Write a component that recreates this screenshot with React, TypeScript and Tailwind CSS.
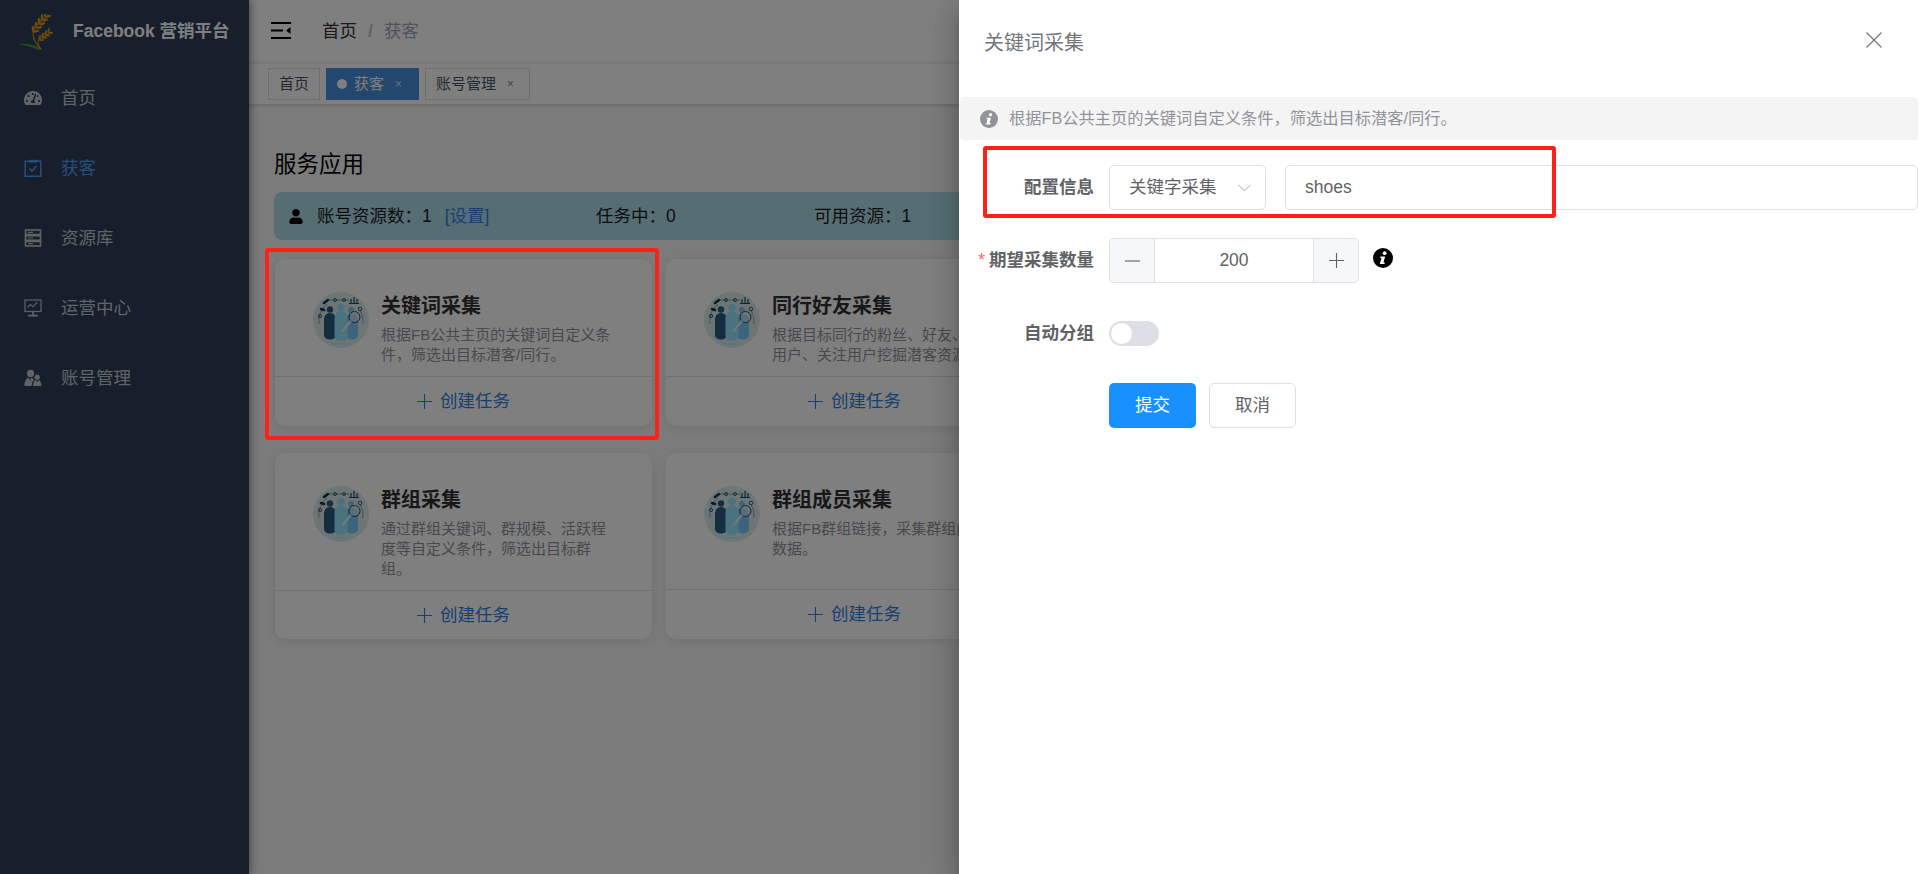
import { FaTachometerAlt, FaUser } from "react-icons/fa";

const menuItems = [
    { label: "首页", icon: <FaTachometerAlt className="w-[18px] h-[18px]" /> },
    { label: "获客", icon: <ClipboardIcon />, active: true },
    { label: "资源库", icon: <ServerIcon /> },
    { label: "运营中心", icon: <MonitorIcon /> },
    { label: "账号管理", icon: <PeopleIcon /> },
];

const cards = [
    { title: "关键词采集", desc: "根据FB公共主页的关键词自定义条件，筛选出目标潜客/同行。" },
    { title: "同行好友采集", desc: "根据目标同行的粉丝、好友、评论用户、关注用户挖掘潜客资源。" },
    { title: "群组采集", desc: "通过群组关键词、群规模、活跃程度等自定义条件，筛选出目标群组。" },
    { title: "群组成员采集", desc: "根据FB群组链接，采集群组内成员数据。" },
];

function ClipboardIcon() {
    return (
        <svg width="18" height="18" viewBox="0 0 18 18" fill="none" stroke="currentColor" strokeWidth="1.4">
            <path d="M5 2.2H1.2v15h15.6v-15H13" />
            <rect x="5" y="0.8" width="8" height="2.8" fill="currentColor" stroke="none" />
            <path d="M5.5 9.5l2.5 2.5 4.500-5" strokeWidth="1.6" />
        </svg>
    );
}

function ServerIcon() {
    return (
        <svg width="18" height="18" viewBox="0 0 18 18" fill="none" stroke="currentColor" strokeWidth="1.6">
            <rect x="1.5" y="1" width="15" height="4.6" />
            <rect x="1.5" y="6.7" width="15" height="4.6" />
            <rect x="1.5" y="12.4" width="15" height="4.6" />
            <path d="M4 3.3h5M4 9h5M4 14.7h5" strokeWidth="1.2" />
        </svg>
    );
}

function MonitorIcon() {
    return (
        <svg width="18" height="18" viewBox="0 0 18 18" fill="none" stroke="currentColor" strokeWidth="1.2">
            <rect x="1" y="1" width="16" height="11.5" />
            <path d="M3.5 8.5l3-3 2.5 2.2 4.5-4.5" />
            <path d="M9 12.5v3.6M4 16.6h10" strokeWidth="1.6" />
        </svg>
    );
}

function PeopleIcon() {
    return (
        <svg width="18" height="18" viewBox="0 0 18 18" fill="currentColor">
            <circle cx="6.5" cy="4.4" r="3.6" />
            <path d="M0.5 17c0-4.4 1.5-8 4.4-8.3L6 12l1-3.3c1.4.2 2.5 1.1 3 2.5-1.6.9-2.3 3-2.3 5.8z" />
            <circle cx="13.2" cy="8.2" r="2.6" />
            <path d="M9 17c0-3.2 1.2-5.6 3.4-5.9l.8 2.4.8-2.4c2.2.3 3.5 2.7 3.5 5.9z" />
        </svg>
    );
}

// Grains of an ear of wheat, placed in pairs along its axis
function WheatEar({ x1, y1, x2, y2, pairs, size }: { x1: number; y1: number; x2: number; y2: number; pairs: number; size: number }) {
    const axis = (Math.atan2(y2 - y1, x2 - x1) * 180) / Math.PI;
    const grains = Array.from({ length: pairs }, (_, i) => {
        const t = i / (pairs - 1);
        return { cx: x1 + (x2 - x1) * t, cy: y1 + (y2 - y1) * t };
    });
    return (
        <g fill="#dc9416">
            {grains.map((g, i) => (
                <g key={i}>
                    <ellipse cx={g.cx} cy={g.cy} rx={size} ry={size * 0.42} transform={`rotate(${axis - 38} ${g.cx} ${g.cy}) translate(${size} 0)`} />
                    <ellipse cx={g.cx} cy={g.cy} rx={size} ry={size * 0.42} transform={`rotate(${axis + 38} ${g.cx} ${g.cy}) translate(${size} 0)`} />
                </g>
            ))}
        </g>
    );
}

function WheatLogo() {
    return (
        <svg width="36" height="36" viewBox="0 0 36 36" fill="none">
            <path d="M0 30c7-.8 16 .2 24 5-2 1-4 .8-7-.6C11 32 5 31 0 30z" fill="#4f9a2c" />
            <path d="M23 35c-5-5-8-10-8-15 0-5 4-11 15-18" stroke="#dc9416" strokeWidth="1.1" />
            <path d="M23 35c-3-4-4-7-2-9 2-2 7-5 13-8" stroke="#dc9416" strokeWidth="1" />
            <WheatEar x1={15} y1={18} x2={27} y2={3} pairs={5} size={3.2} />
            <WheatEar x1={21} y1={26} x2={30} y2={19} pairs={4} size={2.6} />
        </svg>
    );
}

function CardBadge() {
    return (
        <svg width="56" height="56" viewBox="0 0 56 56" className="shrink-0">
            <circle cx="28" cy="28" r="28" fill="#dcecea" />
            <path d="M6 32a22 22 0 0 1 8-20M16 8h20M47 18a22 22 0 0 1 3 14" fill="none" stroke="#3f6c88" strokeWidth="0.6" />
            <path d="M11 11l4-3M8 17l3 1" stroke="#17344c" strokeWidth="2.6" strokeLinecap="round" />
            <circle cx="7" cy="24" r="1.6" fill="none" stroke="#2f5d80" />
            <circle cx="22" cy="8" r="1.5" fill="none" stroke="#2f5d80" />
            <circle cx="31" cy="8" r="1.5" fill="none" stroke="#2f5d80" />
            <circle cx="47" cy="17" r="1.8" fill="none" stroke="#2f5d80" />
            <path d="M38 11V7M41 11V5M44 11V7M36 11.5h10" stroke="#1f4a6c" strokeWidth="1.2" />
            <circle cx="17" cy="17.5" r="3.2" fill="#285a82" />
            <path d="M11 28c0-4 2-7 6-7s6 3 6 7v15c0 6-12 6-12 0z" fill="#285a82" />
            <circle cx="38" cy="18" r="3" fill="#78c8fa" />
            <path d="M33 28c0-4 2-6 5-6s7 2 7 6v15c0 6-12 6-12 0z" fill="#78c8fa" />
            <circle cx="28" cy="15.5" r="3.7" fill="#96e6ff" />
            <path d="M21.500 27c0-5 2-7.500 6.500-7.500s6.500 2.500 6.500 7.500v17c0 6.500-13 6.500-13 0z" fill="#96e6ff" />
            <circle cx="41.5" cy="25" r="5.5" fill="#e2ecec" fillOpacity="0.55" stroke="#1f4a6c" strokeWidth="1" />
            <path d="M37.500 29.500l-7.500 9" stroke="#e6f0f0" strokeWidth="2.2" strokeLinecap="round" />
            <path d="M18 52h20" stroke="#96e6ff" strokeWidth="1" />
        </svg>
    );
}

function InfoGlyph({ className }: { className: string }) {
    return (
        <svg viewBox="0 0 24 24" className={className}>
            <circle cx="12" cy="12" r="12" fill="currentColor" />
            <circle cx="14" cy="6.2" r="2.2" fill="#fff" />
            <path d="M9 10.2h5.6L12.5 17.4h1.7l-.5 1.9H8.1L10.2 12.1H8.500z" fill="#fff" />
        </svg>
    );
}

function PlusGlyph({ className }: { className?: string }) {
    return (
        <svg width="15" height="15" viewBox="0 0 15 15" stroke="currentColor" strokeWidth="1.1" className={className}>
            <path d="M0 7.5h15M7.5 0v15" />
        </svg>
    );
}

function FeatureCard({ title, desc }: { title: string; desc: string }) {
    return (
        <div className="h-full flex flex-col bg-white rounded-[10px] shadow-[0_2px_12px_rgba(0,0,0,0.1)]">
            <div className="flex flex-1 pl-[38px] pr-[20px] pt-[33px] pb-[11px]">
                <CardBadge />
                <div className="ml-[12px] w-[234px]">
                    <h3 className="text-[20px] leading-[28px] font-bold text-[#303133]">{title}</h3>
                    <p className="mt-[5px] text-[15px] leading-[20px] text-[#909399]">{desc}</p>
                </div>
            </div>
            <div className="h-[50px] shrink-0 border-t border-[#dcdfe6] flex items-center justify-center text-[17.5px] text-[#2f7fe0]">
                <PlusGlyph className="mr-[8px]" />
                创建任务
            </div>
        </div>
    );
}

function FormLabel({ text, required }: { text: string; required?: boolean }) {
    return (
        <label className="w-[135px] mr-[15px] shrink-0 text-right text-[17.5px] font-bold text-[#606266]">
            {required && <span className="text-[#f56c6c] font-normal mr-[4px]">*</span>}
            {text}
        </label>
    );
}

export default function App() {
    return (
        <div className="relative flex h-screen w-full overflow-hidden bg-[#f7f7f7] font-['Liberation_Sans','Noto_Sans_CJK_SC',sans-serif]">
            {/* Sidebar */}
            <aside className="relative z-10 w-[249px] shrink-0 bg-[#2f3f58] shadow-[2px_0_8px_rgba(0,21,41,0.45)]">
                <div className="h-[63px] flex items-center pl-[18px]">
                    <WheatLogo />
                    <span className="ml-[19px] text-[17.5px] font-bold text-white whitespace-nowrap">Facebook 营销平台</span>
                </div>
                <nav>
                    {menuItems.map(item => (
                        <div
                            key={item.label}
                            className={`h-[70px] flex items-center pl-[24px] text-[17.5px] ${item.active ? "text-[#4f9cf9]" : "text-[#c0c8d2]"}`}
                        >
                            <span className="w-[18px] flex justify-center">{item.icon}</span>
                            <span className="ml-[19px]">{item.label}</span>
                        </div>
                    ))}
                </nav>
            </aside>

            {/* Main */}
            <main className="flex-1 min-w-0 flex flex-col">
                <header className="h-[63px] shrink-0 bg-white flex items-center pl-[22px]">
                    <svg width="20" height="17" viewBox="0 0 20 17" fill="#000" className="mb-[3px]">
                        <rect width="20" height="2" />
                        <rect y="7.5" width="12" height="2" />
                        <rect y="15" width="20" height="2" />
                        <path d="M19.5 5v7L15 8.5z" />
                    </svg>
                    <div className="ml-[31px] text-[17.5px] text-[#303133]">
                        首页
                        <span className="mx-[11px] font-bold text-[#c0c4cc]">/</span>
                        <span className="text-[#97a8be]">获客</span>
                    </div>
                </header>
                <div className="h-[41px] shrink-0 bg-white border-t border-[#eeeeee] shadow-[0_1px_4px_rgba(0,0,0,0.2)] flex items-start gap-[6px] pl-[19px] pt-[4px] text-[15px]">
                    <span className="h-[32px] w-[52px] flex items-center justify-center border border-[#d8dce5] text-[#495060]">首页</span>
                    <span className="h-[32px] w-[93px] pl-[11px] flex items-center bg-[#468fdc] text-white">
                        <span className="w-[10px] h-[10px] rounded-full bg-white mr-[7px]" />
                        获客
                        <span className="ml-[11px] text-[12px] opacity-70">×</span>
                    </span>
                    <span className="h-[32px] w-[105px] pl-[10px] flex items-center border border-[#d8dce5] text-[#495060]">
                        账号管理
                        <span className="ml-[11px] text-[12px] opacity-70">×</span>
                    </span>
                </div>
                <section className="flex-1 pl-[25px] pr-[25px]">
                    <h2 className="mt-[44px] text-[22.5px] leading-[34px] text-[#000]">服务应用</h2>
                    <div className="mt-[10px] h-[48px] rounded-[8px] bg-[#aedbe8] flex items-center pl-[15px] text-[17.5px] text-[#1a1a1a]">
                        <FaUser className="w-[14px] h-[15px] text-black" />
                        <span className="ml-[14px] w-[279px]">
                            账号资源数：1<span className="ml-[13px] text-[#2f7fe0]">[设置]</span>
                        </span>
                        <span className="w-[218px]">任务中：0</span>
                        <span>可用资源：1</span>
                    </div>
                    <div className="ml-px mt-[19px] grid grid-cols-[377px_377px] grid-rows-[167px_186px] gap-x-[14px] gap-y-[27px]">
                        {cards.map(card => (
                            <FeatureCard key={card.title} title={card.title} desc={card.desc} />
                        ))}
                    </div>
                </section>
            </main>

            {/* Mask */}
            <div className="absolute inset-0 z-20 bg-black/50" />

            {/* Drawer */}
            <div className="absolute top-0 bottom-0 right-0 z-30 w-[960px] bg-white shadow-[0_8px_10px_-5px_rgba(0,0,0,0.2),0_16px_24px_2px_rgba(0,0,0,0.14),0_6px_30px_5px_rgba(0,0,0,0.12)]">
                <div className="h-[97px] flex items-start justify-between pl-[25px] pr-[37px] pt-[29px]">
                    <span className="text-[20px] leading-[28px] text-[#72767b]">关键词采集</span>
                    <svg width="16" height="16" viewBox="0 0 16 16" stroke="#72767b" strokeWidth="1.2" className="mt-[3px]">
                        <path d="M0.5 0.5l15 15M15.5 0.5l-15 15" />
                    </svg>
                </div>
                <div className="ml-px mr-px h-[43px] rounded-[4px] bg-[#f4f4f5] flex items-center pl-[20px] text-[#909399]">
                    <InfoGlyph className="w-[18px] h-[18px] text-[#909399]" />
                    <span className="ml-[11px] text-[16.25px]">根据FB公共主页的关键词自定义条件，筛选出目标潜客/同行。</span>
                </div>
                <form className="mt-[25px] mr-px flex flex-col gap-[28px]">
                    <div className="h-[45px] flex items-center">
                        <FormLabel text="配置信息" />
                        <div className="w-[157px] h-[45px] shrink-0 rounded-[5px] border border-[#dcdfe6] flex items-center justify-between pl-[19px] pr-[14px] text-[17.5px] text-[#606266]">
                            关键字采集
                            <svg width="13" height="8" viewBox="0 0 13 8" fill="none" stroke="#c0c4cc" strokeWidth="1.1">
                                <path d="M0.5 0.8l6 6 6-6" />
                            </svg>
                        </div>
                        <div className="ml-[19px] flex-1 h-[45px] rounded-[5px] border border-[#dcdfe6] flex items-center pl-[19px] text-[17.5px] text-[#606266]">
                            shoes
                        </div>
                    </div>
                    <div className="h-[45px] flex items-center">
                        <FormLabel text="期望采集数量" required />
                        <div className="w-[250px] h-[45px] shrink-0 rounded-[5px] border border-[#dcdfe6] flex items-stretch text-[17.5px] text-[#606266]">
                            <span className="w-[45px] flex items-center justify-center bg-[#f5f7fa] border-r border-[#dcdfe6] rounded-l-[5px]">
                                <svg width="15" height="2" viewBox="0 0 15 2" stroke="currentColor" strokeWidth="1.1">
                                    <path d="M0 1h15" />
                                </svg>
                            </span>
                            <span className="flex-1 flex items-center justify-center">200</span>
                            <span className="w-[45px] flex items-center justify-center bg-[#f5f7fa] border-l border-[#dcdfe6] rounded-r-[5px]">
                                <PlusGlyph />
                            </span>
                        </div>
                        <InfoGlyph className="ml-[14px] mb-[6px] w-[20px] h-[20px] text-black" />
                    </div>
                    <div className="h-[45px] flex items-center">
                        <FormLabel text="自动分组" />
                        <span className="w-[50px] h-[25px] rounded-full bg-[#dcdfe6] p-[2px]">
                            <span className="block w-[21px] h-[21px] rounded-full bg-white" />
                        </span>
                    </div>
                    <div className="h-[45px] flex items-center pl-[150px] gap-[13px] mt-[-1px] text-[17.5px]">
                        <span className="w-[87px] h-[45px] rounded-[5px] bg-[#1890ff] text-white flex items-center justify-center">提交</span>
                        <span className="w-[87px] h-[45px] rounded-[5px] border border-[#dcdfe6] text-[#606266] flex items-center justify-center">取消</span>
                    </div>
                </form>
            </div>

            {/* Red annotation frames */}
            <div className="absolute z-40 left-[265px] top-[248px] w-[394px] h-[192px] border-[4px] border-[#ff2016] rounded-[3px]" />
            <div className="absolute z-40 left-[983px] top-[146px] w-[573px] h-[72px] border-[4px] border-[#ff2016] rounded-[3px]" />
        </div>
    );
}
